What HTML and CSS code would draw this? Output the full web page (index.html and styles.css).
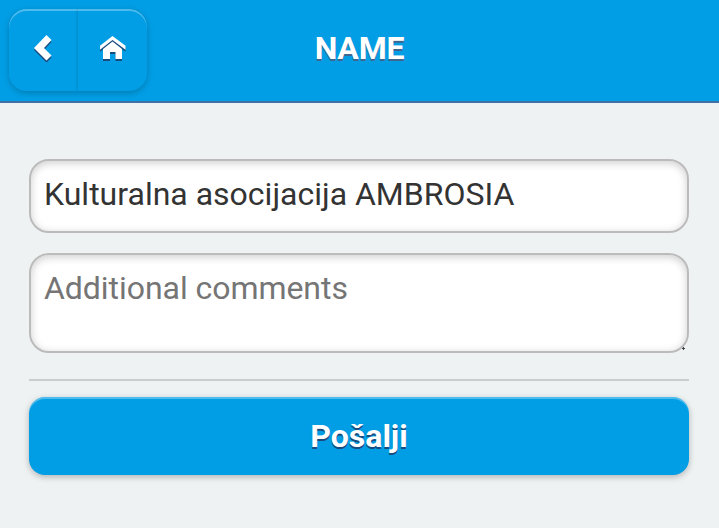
FILE: index.html
```html
<!DOCTYPE html>
<html lang="sr">
<head>
<meta charset="utf-8">
<title>NAME</title>
<link rel="stylesheet" href="styles.css">
</head>
<body>
<header class="bar">
  <nav class="group">
    <a class="back" href="#" aria-label="Back"><svg class="icon" width="18" height="27" viewBox="0 0 18 27"><path d="M12.5 0L0 13L12.5 25.5L17.5 20.5L10 13L17.5 5Z"/></svg></a>
    <a class="home" href="#" aria-label="Home"><svg class="icon" width="26" height="25" viewBox="0 0 26 25"><path d="M12.5 0L25.5 9.7V13.7L12.5 4L0 13.7V9.7Z"/><path d="M12.5 5.6L22 13V23H15.5V16H10V23H3V13Z"/></svg></a>
  </nav>
  <h1 class="title">NAME</h1>
</header>
<main class="content">
  <form class="form">
    <input class="field" type="text" value="Kulturalna asocijacija AMBROSIA">
    <div class="area-wrap"><textarea class="field area" placeholder="Additional comments"></textarea><i class="grip"></i></div>
    <hr class="rule">
    <button class="submit" type="button">Pošalji</button>
  </form>
</main>
</body>
</html>
```
FILE: styles.css
```css
* { box-sizing: border-box; }
body {
  margin: 0;
  min-height: 100vh;
  background: #eef2f3;
  font-family: Roboto, sans-serif;
  font-size: 32px;
}
.bar {
  display: grid;
  grid-template-columns: 138px 1fr 138px;
  height: 103px;
  padding: 9px 9px 0;
  background: #029ee5;
  border-bottom: 2px solid #3f72a4;
}
.group {
  display: flex;
  height: 82px;
  border-radius: 18px;
  box-shadow: 0 2px 6px rgba(0, 0, 0, .22);
}
.back, .home {
  display: flex;
  align-items: flex-start;
  justify-content: center;
  width: 69px;
  padding-top: 26px;
  background: #029ee5;
  box-shadow: inset 0 2px 0 rgba(255, 255, 255, .3);
}
.back {
  padding-right: 2px;
  border-radius: 18px 0 0 18px;
}
.home {
  border-radius: 0 18px 18px 0;
  box-shadow: -1px 0 3px rgba(0, 0, 0, .13), inset 0 2px 0 rgba(255, 255, 255, .3);
  clip-path: inset(0 0 0 -3px round 0 18px 18px 0);
}
.icon {
  overflow: visible;
  fill: #fff;
  filter: drop-shadow(0 2px 0 #194b7e);
}
.home .icon { margin-top: 1px; }
.title {
  margin: 0;
  text-align: center;
  font-size: 32px;
  line-height: 78px;
  font-weight: 700;
  letter-spacing: -.2px;
  color: #fff;
  text-shadow: 0 2px 0 #3e6790;
}
.content { padding: 56px 30px 40px 29px; }
.form { display: flex; flex-direction: column; }
.field {
  display: block;
  width: 100%;
  height: 74px;
  margin: 0;
  padding: 0 13px 4px;
  border: 2px solid #bbb;
  border-radius: 20px;
  background: #fff;
  box-shadow: inset 0 2px 8px rgba(0, 0, 0, .2);
  color: #333;
  font: 400 32px/40px Roboto, sans-serif;
  outline: none;
}
.area-wrap { position: relative; margin-top: 20px; }
.area {
  height: 100px;
  padding-top: 13px;
  resize: none;
  overflow: hidden;
}
.area::placeholder { color: #757575; letter-spacing: -.05px; }
.grip {
  position: absolute;
  right: 4px;
  bottom: 3px;
  width: 3px;
  height: 3px;
  background: linear-gradient(#444, #444) 1px 0 / 1px 3px no-repeat, linear-gradient(#444, #444) 0 1px / 3px 1px no-repeat;
}
.rule {
  width: 100%;
  height: 2px;
  margin: 26px 0 16px;
  border: 0;
  background: #cbcdd0;
}
.submit {
  height: 78px;
  padding: 0 0 1px;
  border: 0;
  border-radius: 16px;
  background: #029ee5;
  box-shadow: inset 0 2px 0 rgba(255, 255, 255, .3), 0 2px 6px rgba(0, 0, 0, .26);
  color: #fff;
  font: 700 32px/40px Roboto, sans-serif;
  text-shadow: 0 2px 0 #194b7e;
}
```
